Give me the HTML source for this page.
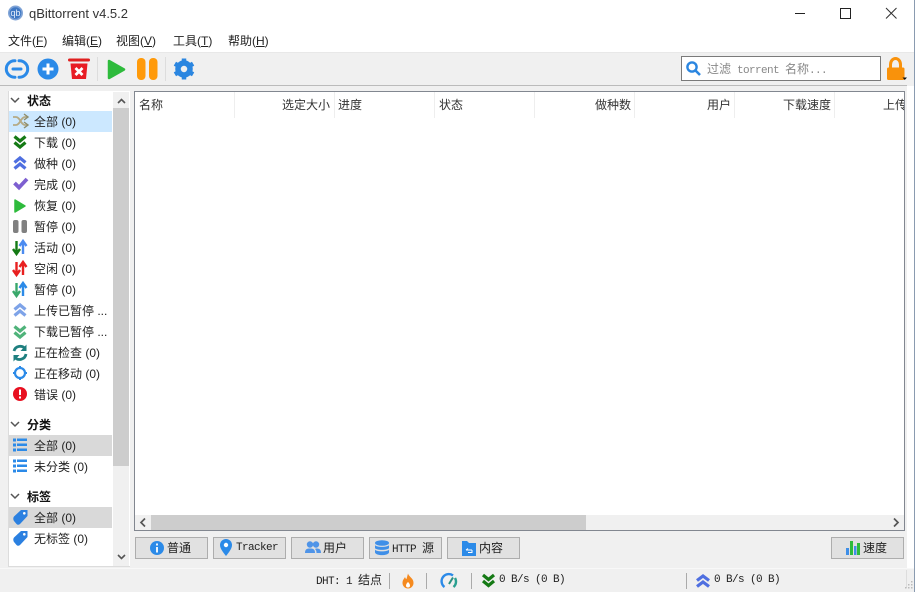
<!DOCTYPE html>
<html><head><meta charset="utf-8"><style>
html,body{margin:0;padding:0}
body{width:915px;height:592px;position:relative;overflow:hidden;background:#fff;font:12px "Liberation Sans","Noto Sans CJK SC",sans-serif;color:#222}
.a{position:absolute}
.t{position:absolute;white-space:pre;line-height:16px}
.m{font-family:"Liberation Mono","Noto Sans CJK SC",monospace;font-size:11px;letter-spacing:-.6px}
.h{position:absolute;top:97px;line-height:16px;white-space:nowrap;color:#333}
.s{position:absolute;top:92px;width:1px;height:26px;background:#eee}
.b{position:absolute;top:537px;height:20px;width:71px;background:#e1e1e1;border:1px solid #adadad}
svg{position:absolute;overflow:visible}
.hd{font-weight:bold;color:#111}
</style></head><body>
<div class="a" style="left:0;top:52px;width:915px;height:34px;background:#f0f0f0;border-top:1px solid #e8e8e8;box-sizing:border-box"></div>
<div class="a" style="left:0;top:85px;width:907px;height:483px;background:#f0f0f0;border-top:1px solid #bbb;box-sizing:border-box"></div>
<div class="a" style="left:0;top:568px;width:915px;height:24px;background:#f0f0f0;border-top:1px solid #f8f8f8;box-sizing:border-box"></div>
<div class="a" style="left:914px;top:0;width:1px;height:592px;background:#8a9bb0"></div>

<!-- title -->
<svg style="left:8px;top:5px" width="17" height="17" viewBox="0 0 17 17"><circle cx="7.500" cy="8" r="7.500" fill="#7fa3d6"/><circle cx="7.500" cy="8" r="5.800" fill="#3f78c4"/><text x="7.500" y="11" text-anchor="middle" font-family="Liberation Sans" font-size="9" fill="#e6eefa">qb</text></svg>
<div class="t" style="left:29px;top:6px;font-size:13px;color:#333">qBittorrent v4.5.2</div>
<svg style="left:795px;top:8px" width="110" height="12"><path d="M0 5.500H10" stroke="#222"/><path d="M45.500 .5H55.500V10.500H45.500Z" fill="none" stroke="#222"/><path d="M91 0L101.500 10.500M101.500 0L91 10.500" stroke="#333" fill="none"/></svg>

<!-- menu -->
<div class="t" style="left:8px;top:33px">文件(<u>F</u>)</div>
<div class="t" style="left:62px;top:33px">编辑(<u>E</u>)</div>
<div class="t" style="left:116px;top:33px">视图(<u>V</u>)</div>
<div class="t" style="left:173px;top:33px">工具(<u>T</u>)</div>
<div class="t" style="left:228px;top:33px">帮助(<u>H</u>)</div>

<!-- toolbar -->
<svg style="left:6px;top:59px" width="22" height="20" viewBox="0 0 22 20"><path d="M9 1.800H8.500A8 8 0 0 0 8.500 18.200H9M13 1.800H13.500A8 8 0 0 1 13.500 18.200H13" fill="none" stroke="#2b8ae8" stroke-width="3" stroke-linecap="round"/><path d="M7 10H15" stroke="#2b8ae8" stroke-width="3" stroke-linecap="round"/></svg>
<svg style="left:37px;top:58px" width="22" height="22"><circle cx="11" cy="11" r="10.500" fill="#2b8ae8"/><path d="M11 5.500V16.500M5.500 11H16.500" stroke="#fff" stroke-width="3"/></svg>
<svg style="left:68px;top:58px" width="22" height="22"><rect x="0" y="0.500" width="22" height="3" rx="1.500" fill="#e02020"/><path d="M2.500 5.500H19.500L18 21H4Z" fill="#e81c24"/><path d="M7.500 10L14.500 17M14.500 10L7.500 17" stroke="#fff" stroke-width="2.800"/></svg>
<div class="a" style="left:97px;top:57px;width:1px;height:24px;background:#ddd"></div>
<svg style="left:107px;top:58px" width="19" height="22"><path d="M2 3L17 11.500L2 20Z" fill="#2ebb3c" stroke="#2ebb3c" stroke-width="2.500" stroke-linejoin="round"/></svg>
<svg style="left:136px;top:58px" width="22" height="22"><rect x="1" y="0" width="8.500" height="22" rx="4" fill="#ff9a0a"/><rect x="13" y="0" width="8.500" height="22" rx="4" fill="#ff9a0a"/></svg>
<div class="a" style="left:165px;top:57px;width:1px;height:24px;background:#ddd"></div>
<svg style="left:173px;top:58px" width="22" height="22" viewBox="0 0 22 22"><circle cx="11" cy="11" r="6" fill="none" stroke="#2b86e0" stroke-width="5.500"/><path d="M11 0.500V5M11 17V21.500M1.900 5.700L5.800 8M16.200 14L20.100 16.300M1.900 16.300L5.800 14M16.200 8L20.100 5.700" stroke="#2b86e0" stroke-width="4.500"/></svg>

<!-- search -->
<div class="a" style="left:681px;top:56px;width:200px;height:25px;background:#fff;border:1px solid #7a7a7a;box-sizing:border-box"></div>
<svg style="left:686px;top:61px" width="15" height="15"><circle cx="6" cy="6" r="4.600" fill="none" stroke="#2b86e0" stroke-width="2.400"/><path d="M9.500 9.500L14 14" stroke="#2b86e0" stroke-width="2.600"/></svg>
<div class="t" style="left:707px;top:61px;color:#888;font-size:12px">过滤<span class="m"> torrent </span>名称<span class="m">...</span></div>
<svg style="left:886px;top:57px" width="22" height="24"><path d="M4.500 11V7.500A5 6 0 0 1 14.500 7.500V11" fill="none" stroke="#f9920b" stroke-width="3"/><rect x="1" y="10.500" width="17.500" height="12.500" rx="1.500" fill="#f9920b"/><path d="M16.500 20.500H21L18.750 23Z" fill="#111"/></svg>

<!-- sidebar -->
<div class="a" style="left:8px;top:91px;width:122px;height:476px;background:#fff;border-left:1px solid #dcdcdc;border-bottom:1px solid #dcdcdc;box-sizing:border-box"></div>
<div class="a" style="left:113px;top:92px;width:16px;height:474px;background:#f0f0f0"></div>
<div class="a" style="left:113px;top:108px;width:16px;height:358px;background:#cdcdcd"></div>
<svg style="left:117px;top:97px" width="10" height="466"><path d="M1 6L4.500 2.500L8 6M1 458L4.500 461.500L8 458" fill="none" stroke="#555" stroke-width="1.600"/></svg>
<div class="a" style="left:9px;top:111px;width:103px;height:21px;background:#cce8ff"></div>
<div class="a" style="left:9px;top:435px;width:103px;height:21px;background:#d9d9d9"></div>
<div class="a" style="left:9px;top:507px;width:103px;height:21px;background:#d9d9d9"></div>

<svg style="left:0;top:0" width="30" height="560">
<path d="M11 98L15 102L19 98M11 422L15 426L19 422M11 494L15 498L19 494" fill="none" stroke="#555" stroke-width="1.500"/>
<!-- shuffle -->
<path d="M13 117H16C20 117 21 125 25 125H27M13 125H16C20 125 21 117 25 117H27" fill="none" stroke="#b5aa85" stroke-width="1.800"/><path d="M24 114L28 117L24 120M24 122L28 125L24 128" fill="none" stroke="#8d8d6d" stroke-width="1.400"/>
<!-- down -->
<path d="M14.500 136.500L20 141L25.500 136.500M14.500 142.500L20 147L25.500 142.500" fill="none" stroke="#157a15" stroke-width="3.200"/>
<!-- up -->
<path d="M14.500 162.500L20 158L25.500 162.500M14.500 168.500L20 164L25.500 168.500" fill="none" stroke="#4f6fe0" stroke-width="3.200"/>
<!-- check -->
<path d="M14.500 183L19 187.500L27 179" fill="none" stroke="#7d5fd0" stroke-width="3.800"/>
<!-- play -->
<path d="M15 200L25 206L15 212Z" fill="#2ebb3c" stroke="#2ebb3c" stroke-width="1.500" stroke-linejoin="round"/>
<!-- pause -->
<rect x="13" y="220" width="5.500" height="13" rx="2" fill="#808080"/><rect x="21.500" y="220" width="5.500" height="13" rx="2" fill="#808080"/>
<!-- active -->
<path d="M16.500 241V253M13 249L16.500 254L20 249" fill="none" stroke="#157a15" stroke-width="2.400"/><path d="M23 254V242M19.500 246L23 241L26.500 246" fill="none" stroke="#4b8bf0" stroke-width="2.400"/>
<!-- idle -->
<path d="M16.500 262V274M13 270L16.500 275L20 270" fill="none" stroke="#e82020" stroke-width="2.400"/><path d="M23 275V263M19.500 267L23 262L26.500 267" fill="none" stroke="#e82020" stroke-width="2.400"/>
<!-- stalled -->
<path d="M16.500 283V295M13 291L16.500 296L20 291" fill="none" stroke="#3aa86b" stroke-width="2.400"/><path d="M23 296V284M19.500 288L23 283L26.500 288" fill="none" stroke="#2b8ae8" stroke-width="2.400"/>
<!-- up paused -->
<path d="M14.500 309.500L20 305L25.500 309.500M14.500 315.500L20 311L25.500 315.500" fill="none" stroke="#7ea3e8" stroke-width="3.200"/>
<!-- down paused -->
<path d="M14.500 326.500L20 331L25.500 326.500M14.500 332.500L20 337L25.500 332.500" fill="none" stroke="#4fb37a" stroke-width="3.200"/>
<!-- checking -->
<path d="M14 351A6.500 6.500 0 0 1 25.500 349M26 354A6.500 6.500 0 0 1 14.500 357" fill="none" stroke="#1e7f7f" stroke-width="2.800"/><path d="M26.500 344.500V351H20.500ZM13.500 361.500V355H19.500Z" fill="#1e7f7f"/>
<!-- moving -->
<circle cx="20" cy="373" r="5" fill="none" stroke="#2b8ae8" stroke-width="2.200"/><path d="M20 366V369M20 377V380M13 373H16M24 373H27" stroke="#2b8ae8" stroke-width="2"/>
<!-- error -->
<circle cx="20" cy="394" r="7" fill="#e81020"/><path d="M20 389.500V395M20 396.500V398.500" stroke="#fff" stroke-width="2"/>
<!-- list icons -->
<g fill="#2b8ae8"><rect x="13" y="438.500" width="3" height="3"/><rect x="13" y="443.500" width="3" height="3"/><rect x="13" y="448.500" width="3" height="3"/><rect x="17" y="438.500" width="10" height="2.500"/><rect x="17" y="443.500" width="10" height="2.500"/><rect x="17" y="448.500" width="10" height="2.500"/>
<rect x="13" y="459.500" width="3" height="3"/><rect x="13" y="464.500" width="3" height="3"/><rect x="13" y="469.500" width="3" height="3"/><rect x="17" y="459.500" width="10" height="2.500"/><rect x="17" y="464.500" width="10" height="2.500"/><rect x="17" y="469.500" width="10" height="2.500"/></g>
<!-- tags -->
<path d="M14 516.500L21 510H27.500V516L20 524Q18 525.500 16.500 524L14 521Q12.500 518.500 14 516.500Z" fill="#2b80e0"/><circle cx="24.300" cy="513.300" r="1.300" fill="#fff"/>
<path d="M14 537.500L21 531H27.500V537L20 545Q18 546.500 16.500 545L14 542Q12.500 539.500 14 537.500Z" fill="#2b80e0"/><circle cx="24.300" cy="534.300" r="1.300" fill="#fff"/>
</svg>

<div class="t hd" style="left:27px;top:93px">状态</div>
<div class="t" style="left:34px;top:114px">全部 (0)</div>
<div class="t" style="left:34px;top:135px">下载 (0)</div>
<div class="t" style="left:34px;top:156px">做种 (0)</div>
<div class="t" style="left:34px;top:177px">完成 (0)</div>
<div class="t" style="left:34px;top:198px">恢复 (0)</div>
<div class="t" style="left:34px;top:219px">暂停 (0)</div>
<div class="t" style="left:34px;top:240px">活动 (0)</div>
<div class="t" style="left:34px;top:261px">空闲 (0)</div>
<div class="t" style="left:34px;top:282px">暂停 (0)</div>
<div class="t" style="left:34px;top:303px">上传已暂停 ...</div>
<div class="t" style="left:34px;top:324px">下载已暂停 ...</div>
<div class="t" style="left:34px;top:345px">正在检查 (0)</div>
<div class="t" style="left:34px;top:366px">正在移动 (0)</div>
<div class="t" style="left:34px;top:387px">错误 (0)</div>
<div class="t hd" style="left:27px;top:417px">分类</div>
<div class="t" style="left:34px;top:438px">全部 (0)</div>
<div class="t" style="left:34px;top:459px">未分类 (0)</div>
<div class="t hd" style="left:27px;top:489px">标签</div>
<div class="t" style="left:34px;top:510px">全部 (0)</div>
<div class="t" style="left:34px;top:531px">无标签 (0)</div>

<!-- table -->
<div class="a" style="left:134px;top:91px;width:771px;height:440px;background:#fff;border:1px solid #828790;box-sizing:border-box;overflow:hidden"></div>
<div class="s" style="left:234px"></div><div class="s" style="left:334px"></div><div class="s" style="left:434px"></div><div class="s" style="left:534px"></div><div class="s" style="left:634px"></div><div class="s" style="left:734px"></div><div class="s" style="left:834px"></div>
<div class="h" style="left:139px">名称</div>
<div class="h" style="left:282px">选定大小</div>
<div class="h" style="left:338px">进度</div>
<div class="h" style="left:439px">状态</div>
<div class="h" style="left:595px">做种数</div>
<div class="h" style="left:707px">用户</div>
<div class="h" style="left:783px">下载速度</div>
<div class="h" style="left:883px;width:21px;overflow:hidden">上传</div>
<div class="a" style="left:135px;top:515px;width:769px;height:15px;background:#f0f0f0"></div>
<div class="a" style="left:151px;top:515px;width:435px;height:15px;background:#cdcdcd"></div>
<svg style="left:139px;top:518px" width="760" height="10"><path d="M6 .5L2 4.500L6 8.500M755 .5L759 4.500L755 8.500" fill="none" stroke="#555" stroke-width="1.700"/></svg>

<!-- tabs -->
<div class="b" style="left:135px"></div><div class="b" style="left:213px"></div><div class="b" style="left:291px"></div><div class="b" style="left:369px"></div><div class="b" style="left:447px"></div><div class="b" style="left:831px"></div>
<svg style="left:0;top:530px" width="915" height="30">
<circle cx="157" cy="18" r="7" fill="#2b8ae8"/><path d="M157 13.500V15.500M157 17V22.500" stroke="#fff" stroke-width="1.800"/>
<path d="M226 26C222 21 220 18 220 15A6 6 0 0 1 232 15C232 18 230 21 226 26Z" fill="#2b8ae8"/><circle cx="226" cy="15" r="2.200" fill="#fff"/>
<g fill="#4f94e8"><circle cx="310" cy="14.500" r="3.200"/><circle cx="316" cy="14.500" r="3.200"/><path d="M305 23C305 19 307 18.500 310 18.500C313 18.500 315 19 315 23Z"/><path d="M316 18.500C319 18.500 321 19 321 23H316.500C316.500 21 316 20 315 19Z"/></g>
<g fill="#3f8fe8"><ellipse cx="382" cy="13" rx="7" ry="2.800"/><path d="M375 15C376 17.500 388 17.500 389 15V18C388 20.500 376 20.500 375 18Z"/><path d="M375 19.500C376 22 388 22 389 19.500V22.500C388 26 376 26 375 22.500Z"/></g>
<path d="M462 11H467L469 13H476V26H462Z" fill="#2b8ae8"/><path d="M466 20H472M466 20L468 18.500M472 20V22.500H468" fill="none" stroke="#fff" stroke-width="1"/>
<rect x="846" y="18" width="3" height="7" fill="#3f8fe8"/><rect x="850" y="11" width="3" height="14" fill="#2ebb3c"/><rect x="854" y="16" width="2.500" height="9" fill="#3f8fe8"/><rect x="857" y="13" width="3" height="12" fill="#2ebb3c"/>
</svg>
<div class="t" style="left:167px;top:540px">普通</div>
<div class="t m" style="left:236px;top:540px">Tracker</div>
<div class="t" style="left:323px;top:540px">用户</div>
<div class="t" style="left:392px;top:540px"><span class="m">HTTP </span>源</div>
<div class="t" style="left:479px;top:540px">内容</div>
<div class="t" style="left:863px;top:540px">速度</div>

<!-- status bar -->
<div class="t" style="left:316px;top:572px"><span class="m">DHT: 1 </span>结点</div>
<div class="a" style="left:389px;top:573px;width:1px;height:16px;background:#aaa"></div>
<div class="a" style="left:426px;top:573px;width:1px;height:16px;background:#aaa"></div>
<div class="a" style="left:471px;top:573px;width:1px;height:16px;background:#aaa"></div>
<div class="a" style="left:686px;top:573px;width:1px;height:16px;background:#aaa"></div>
<div class="a" style="left:906px;top:570px;width:1px;height:18px;background:#ddd"></div>
<svg style="left:0;top:560px" width="915" height="32">
<path d="M408 13.500C409 17 413.500 18 413.500 23A5.500 5.500 0 0 1 402.500 23C402.500 20 404 19 405 17C405.500 18.500 406 19 406.500 19C407 17 407.500 15.500 408 13.500Z" fill="#f58a1f"/><path d="M408 22C409 23 410 24 410 25.500A2 2 0 0 1 406 25.500C406 24 407 23 408 22Z" fill="#fff"/>
<path d="M444.500 27A7 7 0 0 1 453 15.500" fill="none" stroke="#2b8ae8" stroke-width="2.400"/><path d="M455 18A7 7 0 0 1 453.500 27" fill="none" stroke="#2aa090" stroke-width="2.400"/><path d="M449 24L453 17.500" stroke="#2a9080" stroke-width="2"/>
<path d="M483 15L488.500 19.500L494 15M483 21L488.500 25.500L494 21" fill="none" stroke="#157a15" stroke-width="3.200"/>
<path d="M697 20.500L703 16L709 20.500M697 26.500L703 22L709 26.500" fill="none" stroke="#4f6fe0" stroke-width="3.200"/>
<g fill="#bbb"><rect x="911" y="21" width="1.500" height="1.500"/><rect x="908" y="24" width="1.500" height="1.500"/><rect x="911" y="24" width="1.500" height="1.500"/><rect x="905" y="27" width="1.500" height="1.500"/><rect x="908" y="27" width="1.500" height="1.500"/><rect x="911" y="27" width="1.500" height="1.500"/></g>
</svg>
<div class="t m" style="left:499px;top:572px">0 B/s (0 B)</div>
<div class="t m" style="left:714px;top:572px">0 B/s (0 B)</div>
</body></html>
